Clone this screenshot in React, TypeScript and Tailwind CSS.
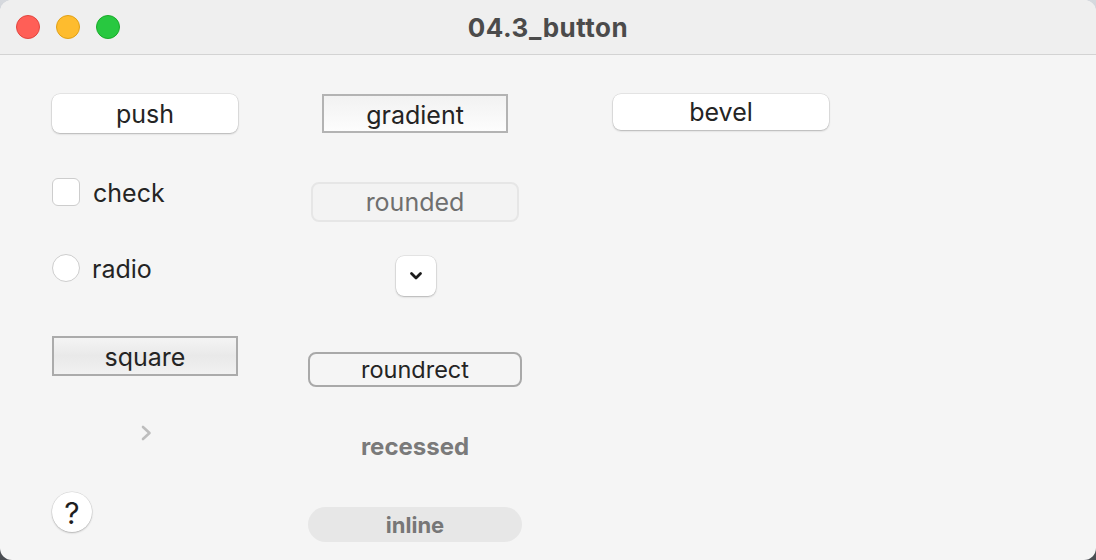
import React from "react";

const font = { fontFamily: "Inter, 'Liberation Sans', sans-serif" };

export default function App() {
  return (
    <div
      className="w-[1096px] h-[560px] bg-gradient-to-b from-[#d6d9de] to-[#4a4d52]"
      style={font}
    >
      <div className="w-full h-full rounded-[12px] overflow-hidden bg-[#f5f5f5] flex flex-col">
        {/* Title bar */}
        <div className="h-[55px] shrink-0 bg-[#efefef] border-b border-[#d3d3d3] flex items-center relative">
          <div className="flex gap-[16px] pl-[16px]">
            <span className="w-[24px] h-[24px] rounded-full bg-[#ff5f57] border border-[#e2463f]" />
            <span className="w-[24px] h-[24px] rounded-full bg-[#febc2e] border border-[#e1a116]" />
            <span className="w-[24px] h-[24px] rounded-full bg-[#28c840] border border-[#1aab29]" />
          </div>
          <div className="absolute inset-0 flex items-center justify-center pointer-events-none">
            <span className="text-[26px] font-bold text-[#4b4b4b] tracking-[0.5px] pt-[1px]">04.3_button</span>
          </div>
        </div>

        {/* Content */}
        <div className="flex flex-1 text-[#242424]">
          {/* Column 1 */}
          <div className="ml-[52px] w-[186px] flex flex-col">
            <button className="mt-[39px] h-[39px] w-full bg-white rounded-[8px] shadow-[0_1px_2px_rgba(0,0,0,0.22),0_0_0_0.5px_rgba(0,0,0,0.12)] text-[25px] leading-none flex items-center justify-center pt-[1px]">
              push
            </button>
            <label className="mt-[45px] h-[28px] flex items-center gap-[13px]">
              <span className="w-[28px] h-[28px] rounded-[6px] bg-white border border-[#cdcdcd] shrink-0" />
              <span className="text-[25px] leading-none pt-[2px]">check</span>
            </label>
            <label className="mt-[48px] h-[28px] flex items-center gap-[12px]">
              <span className="w-[28px] h-[28px] rounded-full bg-white border border-[#cdcdcd] shrink-0" />
              <span className="text-[25px] leading-none pt-[2px]">radio</span>
            </label>
            <button className="mt-[54px] h-[40px] w-full border-2 border-[#ababab] bg-gradient-to-b from-[#f4f4f4] via-[#e9e9e9] to-[#f1f1f1] text-[25px] leading-none flex items-center justify-center pt-[2px]">
              square
            </button>
            <div className="mt-[48px] h-[18px] flex justify-center pl-[2px]">
              <svg width="12" height="18" viewBox="0 0 12 18">
                <path d="M3 3 L9.5 9 L3 15" fill="none" stroke="#bdbdbd" strokeWidth="2.6" strokeLinecap="round" strokeLinejoin="round" />
              </svg>
            </div>
            <button className="mt-[50px] w-[40px] h-[40px] rounded-full bg-white shadow-[0_1px_2px_rgba(0,0,0,0.22),0_0_0_0.5px_rgba(0,0,0,0.12)] text-[30px] font-normal leading-none flex items-center justify-center text-[#1e1e1e] pt-[1px]">
              ?
            </button>
          </div>

          {/* Column 2 */}
          <div className="ml-[70px] w-[214px] flex flex-col items-center">
            <button className="mt-[39px] h-[39px] w-[186px] border-2 border-[#b3b3b3] bg-gradient-to-b from-[#f2f2f2] to-[#fdfdfd] text-[25px] leading-none flex items-center justify-center pt-[3px]">
              gradient
            </button>
            <button className="mt-[49px] h-[40px] w-[208px] rounded-[8px] border-2 border-[#e6e6e6] bg-[#f3f3f3] text-[25px] leading-none text-[#6f6f6f] flex items-center justify-center pt-[1px]">
              rounded
            </button>
            <button className="mt-[34px] ml-[2px] w-[40px] h-[40px] rounded-[8px] bg-white shadow-[0_1px_2px_rgba(0,0,0,0.22),0_0_0_0.5px_rgba(0,0,0,0.12)] flex items-center justify-center">
              <svg width="14" height="10" viewBox="0 0 14 10">
                <path d="M2.5 2.5 L7 7 L11.5 2.5" fill="none" stroke="#1b1b1b" strokeWidth="2.8" strokeLinecap="round" strokeLinejoin="round" />
              </svg>
            </button>
            <button className="mt-[56px] h-[35px] w-full rounded-[8px] border-2 border-[#a9a9a9] bg-[#f5f5f5] text-[23.5px] leading-none flex items-center justify-center pt-[1px]">
              roundrect
            </button>
            <div className="mt-[46px] h-[26px] flex items-center justify-center text-[24px] font-bold text-[#7a7a7a] leading-none pt-[2px]">
              recessed
            </div>
            <button className="mt-[48px] h-[35px] w-full rounded-full bg-[#e7e7e7] text-[22px] font-bold text-[#777777] leading-none flex items-center justify-center pt-[1px]">
              inline
            </button>
          </div>

          {/* Column 3 */}
          <div className="ml-[91px] w-[216px] flex flex-col">
            <button className="mt-[39px] h-[36px] w-full bg-white rounded-[8px] shadow-[0_1px_2px_rgba(0,0,0,0.22),0_0_0_0.5px_rgba(0,0,0,0.12)] text-[25px] leading-none flex items-center justify-center pt-[1px]">
              bevel
            </button>
          </div>
        </div>
      </div>
    </div>
  );
}
